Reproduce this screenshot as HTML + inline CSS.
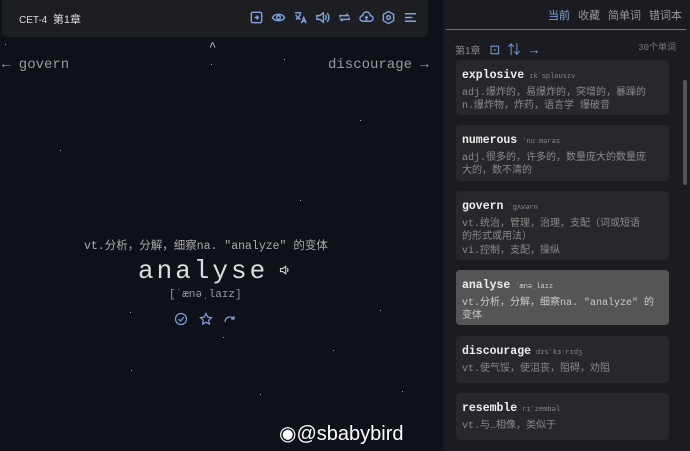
<!DOCTYPE html><html><head><meta charset="utf-8"><style>
*{margin:0;padding:0;box-sizing:border-box}
body{width:690px;height:451px;overflow:hidden;background:#0e1117;font-family:"Liberation Mono","Noto Sans CJK SC",monospace;position:relative;color:#ccc}
.top{position:absolute;left:2px;top:0;width:426px;height:37px;background:#1d1e22;border-radius:0 0 6px 6px}
.top .t{position:absolute;left:17px;top:11px;font-size:10px;color:#ddd;font-family:"Liberation Sans","Noto Sans CJK SC",sans-serif}
.icons{position:absolute;left:247px;top:10px;display:flex;gap:7px}
.icons svg{width:15px;height:15px;stroke:#7fa3e0;fill:none;stroke-width:1.5}
.nav{position:absolute;top:57px;font-size:14px;color:#9a9a9a}
.star{position:absolute;width:1px;height:1px;background:#aaa}
.right{position:absolute;left:443px;top:0;width:247px;height:451px;background:#1b1c1f}
.tabs{position:absolute;right:0;top:7px;font-size:11px;font-family:"Liberation Sans","Noto Sans CJK SC",sans-serif;color:#999}
.tabs span{margin-right:8px}
.card{position:absolute;left:13px;width:213px;background:#27282c;border-radius:4px;padding:9px 6px 7px;font-size:10px;line-height:13.5px;color:#8a8a8a}
.card b{font-size:11.5px;color:#eee;font-weight:bold}
.card i{font-style:normal;font-size:7px;color:#888;margin-left:5px}
.card p{margin-top:2px}
</style></head><body>
<div class="top"><div class="t">CET-4 &nbsp;<span style="font-size:11px">第1章</span></div>
<div class="icons">
<svg viewBox="0 0 16 16"><rect x="2.5" y="2.5" width="11" height="11" rx="1.5"/><path d="M6 8h4M8 6l2 2-2 2"/></svg>
<svg viewBox="0 0 16 16"><path d="M1.5 8C4 3.5 12 3.5 14.5 8 12 12.5 4 12.5 1.5 8z"/><circle cx="8" cy="8" r="2"/></svg>
<svg viewBox="0 0 16 16"><path d="M2 3h7M5.5 2v1M3 5c1 3 3 4 5 5M8 4c-1 3-3 5-5 6M9 14l2.5-6 2.5 6M10 12h3"/></svg>
<svg viewBox="0 0 16 16"><path d="M2 6h3l4-3v10l-4-3H2zM11 5.5c1.3 1.3 1.3 3.7 0 5M13 3.5c2.3 2.3 2.3 6.7 0 9"/></svg>
<svg viewBox="0 0 16 16"><path d="M3 8V6h9l-2-2M13 8v2H4l2 2"/></svg>
<svg viewBox="0 0 16 16"><path d="M4 12a3 3 0 0 1 0-6 4 4 0 0 1 8 0 3 3 0 0 1 0 6zM8 11V7M6.5 8.5 8 7l1.5 1.5"/></svg>
<svg viewBox="0 0 16 16"><circle cx="8" cy="8" r="2"/><path d="M8 1.5l5.5 3.2v6.6L8 14.5l-5.5-3.2V4.7z"/></svg>
<svg viewBox="0 0 16 16"><path d="M2 4h12M2 8h8M2 12h12"/></svg>
</div></div>
<div style="position:absolute;left:209px;top:40px;font-size:12px;color:#ccc">^</div>
<div class="nav" style="left:2px">← govern</div>
<div class="nav" style="left:328px">discourage →</div>
<div class="star" style="left:5px;top:44px"></div><div class="star" style="left:284px;top:59px"></div><div class="star" style="left:211px;top:64px"></div><div class="star" style="left:130px;top:312px"></div><div class="star" style="left:333px;top:350px"></div><div class="star" style="left:380px;top:310px"></div><div class="star" style="left:260px;top:394px"></div><div class="star" style="left:402px;top:391px"></div><div class="star" style="left:131px;top:370px"></div><div class="star" style="left:223px;top:337px"></div><div class="star" style="left:300px;top:200px"></div><div class="star" style="left:60px;top:150px"></div><div class="star" style="left:360px;top:120px"></div>
<div style="position:absolute;left:84px;top:237px;font-size:11.5px;color:#aaa">vt.分析，分解，细察na. "analyze" 的变体</div>
<div style="position:absolute;left:138px;top:256px;font-size:26px;letter-spacing:3px;color:#ddd">analyse</div>
<svg style="position:absolute;left:279px;top:264px" width="12" height="12" viewBox="0 0 16 16" fill="none" stroke="#ccc" stroke-width="1.5"><path d="M2 6h3l4-3v10l-4-3H2zM11 5.5c1.3 1.3 1.3 3.7 0 5"/></svg>
<div style="position:absolute;left:169px;top:289px;font-size:11px;color:#999">[ˈænəˌlaɪz]</div>
<svg style="position:absolute;left:174px;top:312px" width="62" height="14" viewBox="0 0 62 14" fill="none" stroke="#7fa3e0" stroke-width="1.2"><circle cx="7" cy="7" r="5.5"/><path d="M4.5 7l2 2 3.5-4"/><path d="M32 1.5l1.7 3.6 3.8.5-2.8 2.6.7 3.8L32 10.2 28.6 12l.7-3.8-2.8-2.6 3.8-.5z"/><path d="M51 10a5 5 0 0 1 9-3M60 4v3h-3"/></svg>
<div style="position:absolute;left:279px;top:421px;font-size:20px;color:#fff;font-family:'Liberation Sans',sans-serif">◉@sbabybird</div>
<div class="right">
<div class="tabs"><span style="color:#7fa3e0">当前</span><span>收藏</span><span>简单词</span><span>错词本</span></div>
<div style="position:absolute;left:3px;top:29px;width:240px;height:1px;background:#777"></div>
<div style="position:absolute;left:12px;top:39px;font-size:10px;color:#888;font-family:'Liberation Sans','Noto Sans CJK SC',sans-serif">第1章 <span style="color:#7fa3e0;font-size:13px;margin-left:6px">⊡ &nbsp;⇅ &nbsp;→</span></div>
<div style="position:absolute;right:14px;top:40px;font-size:9px;color:#777">30个单词</div>
<div style="position:absolute;left:240px;top:80px;width:4px;height:105px;background:#555;border-radius:2px"></div>
<div class="card" style="top:60px;height:55px"><b>explosive</b><i>ɪkˈsploʊsɪv</i><p>adj.爆炸的，易爆炸的，突增的，暴躁的<br>n.爆炸物，炸药，语言学 爆破音</p></div>
<div class="card" style="top:125px;height:56px"><b>numerous</b><i>ˈnuːmərəs</i><p>adj.很多的，许多的，数量庞大的数量庞<br>大的，数不清的</p></div>
<div class="card" style="top:191px;height:69px"><b>govern</b><i>ˈɡʌvərn</i><p>vt.统治，管理，治理，支配（词或短语<br>的形式或用法）<br>vi.控制，支配，操纵</p></div>
<div class="card" style="top:270px;height:55px;background:#555"><b>analyse</b><i style="color:#ccc">ˈænəˌlaɪz</i><p style="color:#ccc">vt.分析，分解，细察na. "analyze" 的<br>变体</p></div>
<div class="card" style="top:336px;height:47px"><b>discourage</b><i>dɪsˈkɜːrɪdʒ</i><p>vt.使气馁，使沮丧，阻碍，劝阻</p></div>
<div class="card" style="top:393px;height:47px"><b>resemble</b><i>rɪˈzembəl</i><p>vt.与…相像，类似于</p></div>
</div>
</body></html>
